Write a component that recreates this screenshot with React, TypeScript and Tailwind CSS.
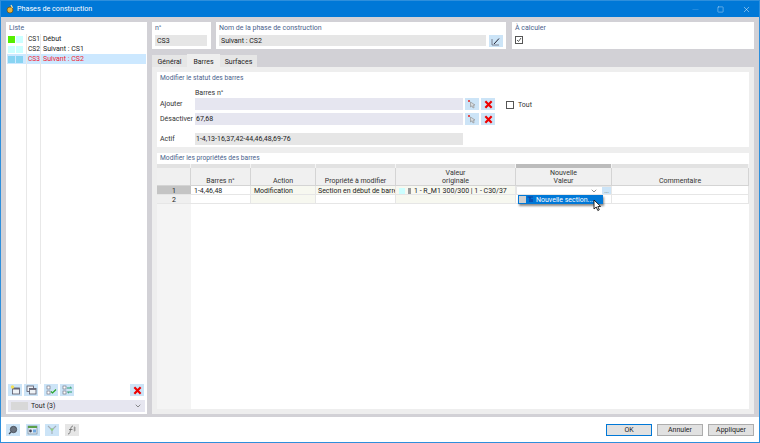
import { Minus, Square, X, ChevronDown } from "lucide-react"

const font = { fontFamily: 'Roboto, "Noto Sans", sans-serif' }

function IconBtn({ children, className = "" }: { children?: React.ReactNode; className?: string }) {
  return <div className={`flex h-[12px] w-[14px] items-center justify-center bg-[#cce4f7] ${className}`}>{children}</div>
}

function RedX({ size = 9 }: { size?: number }) {
  return (
    <svg width={size} height={size} viewBox="0 0 10 10">
      <path d="M1.5 1.5 L8.5 8.5 M8.5 1.5 L1.5 8.5" stroke="#ee0000" strokeWidth="2.4" />
    </svg>
  )
}

function PickIcon() {
  return (
    <svg width="10" height="10" viewBox="0 0 10 10">
      <path d="M1 1 L3 3 M3 1 L1 3" stroke="#e05050" strokeWidth="1" />
      <path d="M3.5 3 L3.5 8 L5 6.8 L6 9 L7.2 8.4 L6.2 6.3 L8 6 Z" fill="#d8dce0" stroke="#888" strokeWidth="0.6" />
    </svg>
  )
}

function ListRow({ a, b, id, name, selected }: { a: string; b: string; id: string; name: string; selected?: boolean }) {
  return (
    <div className={`flex h-[10px] items-center ${selected ? "bg-[#cce8ff] text-[#f01a30]" : "text-[#222]"}`}>
      <div className="flex w-[20px] shrink-0 gap-[1px] pl-[1px]">
        <div className={`h-[7px] w-[7px] ${a}`} />
        <div className={`h-[7px] w-[7px] ${b}`} />
      </div>
      <div className="relative w-[14px] shrink-0 pl-[1px] text-[6.6px]">{id}</div>
      <div className="relative pl-[2px]">{name}</div>
    </div>
  )
}

function SectionTitle({ children }: { children: React.ReactNode }) {
  return <div className="text-[6.7px] leading-[10px] text-[#4a5f8c]">{children}</div>
}

function MemberRow({ label, value, tools }: { label: string; value?: string; tools?: boolean }) {
  return (
    <div className="flex h-[12px] items-center">
      <div className="w-[35px] shrink-0 text-[#333]">{label}</div>
      <div className="flex h-[12px] w-[268px] items-center bg-[#e6e6f0] pl-[1px] text-[#222]">{value}</div>
      {tools && (
        <div className="ml-[2px] flex gap-[2px]">
          <IconBtn><PickIcon /></IconBtn>
          <IconBtn><RedX /></IconBtn>
        </div>
      )}
    </div>
  )
}

const cols = "grid-cols-[34px_60px_65px_80px_120px_96px_137px]"

function HeadCell({ children, className = "" }: { children?: React.ReactNode; className?: string }) {
  return (
    <div className={`flex h-[18px] flex-col items-center justify-end border-r border-b border-[#d4d4d4] bg-[#f0f0f0] text-center leading-[8px] text-[#333] ${className}`}>
      {children}
    </div>
  )
}

function Band({ dark }: { dark?: boolean }) {
  return <div className={`h-[4px] border-r border-[#f4f4f4] ${dark ? "bg-[#bcbcbc]" : "bg-[#e2e2e2]"}`} />
}

function Cell({ children, tint, className = "" }: { children?: React.ReactNode; tint?: boolean; className?: string }) {
  return (
    <div className={`flex h-[9px] items-center overflow-hidden whitespace-nowrap border-r border-b border-[#e6e6e6] pl-[3px] pt-[1px] leading-[8px] text-[#222] ${tint ? "bg-[#f7f8f0]" : "bg-white"} ${className}`}>
      {children}
    </div>
  )
}

function ToolIcon({ type }: { type: string }) {
  if (type === "new")
    return (
      <svg width="11" height="10" viewBox="0 0 11 10">
        <rect x="2.5" y="3" width="7" height="6" fill="#eef2f6" stroke="#556" strokeWidth="0.8" />
        <rect x="2.5" y="3" width="7" height="1.5" fill="#667" />
        <circle cx="2.5" cy="2" r="1.7" fill="#f4e05a" />
      </svg>
    )
  if (type === "copy")
    return (
      <svg width="11" height="10" viewBox="0 0 11 10">
        <rect x="1" y="1" width="6.5" height="5.5" fill="#eef2f6" stroke="#556" strokeWidth="0.8" />
        <rect x="3.5" y="3.5" width="6.5" height="5.5" fill="#eef2f6" stroke="#556" strokeWidth="0.8" />
        <rect x="3.5" y="3.5" width="6.5" height="1.4" fill="#667" />
      </svg>
    )
  if (type === "check")
    return (
      <svg width="11" height="10" viewBox="0 0 11 10">
        <rect x="1" y="1" width="3" height="3" fill="#fff" stroke="#667" strokeWidth="0.6" />
        <rect x="1" y="6" width="3" height="3" fill="#fff" stroke="#667" strokeWidth="0.6" />
        <path d="M5 6.5 L6.5 8 L10 4.5" fill="none" stroke="#2aa52a" strokeWidth="1.2" />
      </svg>
    )
  return (
    <svg width="11" height="10" viewBox="0 0 11 10">
      <rect x="1" y="1" width="3" height="3" fill="#fff" stroke="#667" strokeWidth="0.6" />
      <rect x="1" y="6" width="3" height="3" fill="#fff" stroke="#667" strokeWidth="0.6" />
      <path d="M5 3 H9.5 M9.5 3 L8 1.8 M10 7 H5.5 M5.5 7 L7 8.2" fill="none" stroke="#2f9e6e" strokeWidth="1" />
    </svg>
  )
}

function FootBtn({ children }: { children: React.ReactNode }) {
  return <div className="flex h-[12px] w-[14px] items-center justify-center bg-[#cce4f7]">{children}</div>
}

function DlgBtn({ label, primary }: { label: string; primary?: boolean }) {
  return (
    <div className={`flex h-[12px] w-[46px] items-center justify-center border bg-[#e1e1e1] text-[#222] ${primary ? "border-[#0078d7]" : "border-[#adadad]"}`}>
      {label}
    </div>
  )
}

export default function App() {
  return (
    <div style={font} className="flex h-[443px] w-[760px] flex-col overflow-hidden border border-[#2e8fdc] bg-[#d2d1d6] text-[7px] leading-[10px]">
      {/* title bar */}
      <div className="flex h-[16px] shrink-0 items-center bg-[#0078d7] text-white">
        <svg className="ml-[5px]" width="9" height="10" viewBox="0 0 9 10">
          <circle cx="4" cy="6" r="3" fill="#e8b23a" stroke="#6b4a10" strokeWidth="0.7" />
          <path d="M5 1 L6.5 4" stroke="#f3e0a0" strokeWidth="1.2" />
        </svg>
        <span className="ml-[2px] text-[7.2px]">Phases de construction</span>
        <div className="ml-auto flex items-center">
          <Minus size={9} strokeWidth={1} className="mr-[17px] text-[#5aa9e6]" />
          <Square size={7} strokeWidth={1.2} className="mr-[18px]" />
          <X size={9} strokeWidth={1.2} className="mr-[8px]" />
        </div>
      </div>

      <div className="flex min-h-0 flex-1 gap-[5px] px-[5px] pt-[5px] pb-[3px]">
        {/* left list */}
        <div className="flex w-[141px] shrink-0 flex-col bg-white">
          <div className="h-[12px] pl-[3px] pt-[1px] leading-[10px] text-[#4a5f8c]">Liste</div>
          <div className="relative flex-1 pl-[1px] pr-[1px]">
            <div className="absolute top-0 bottom-0 left-[20px] border-l border-[#e8e8e8]" />
            <div className="absolute top-0 bottom-0 left-[34px] border-l border-[#e8e8e8]" />
            <ListRow a="bg-[#55ee00]" b="bg-[#ccffff]" id="CS1" name="Début" />
            <ListRow a="bg-[#ccffff]" b="bg-[#ccffff]" id="CS2" name="Suivant : CS1" />
            <ListRow a="bg-[#88d4f2]" b="bg-[#88d4f2]" id="CS3" name="Suivant : CS2" selected />
          </div>
          <div className="flex h-[12px] items-center pl-[2px] pr-[3px]">
            <IconBtn><ToolIcon type="new" /></IconBtn>
            <IconBtn className="ml-[2px]"><ToolIcon type="copy" /></IconBtn>
            <IconBtn className="ml-[6px]"><ToolIcon type="check" /></IconBtn>
            <IconBtn className="ml-[2px]"><ToolIcon type="swap" /></IconBtn>
            <IconBtn className="ml-auto"><RedX /></IconBtn>
          </div>
          <div className="mx-[2px] mt-[4px] mb-[2px] flex h-[12px] items-center bg-[#e6e6f0] pl-[3px] pr-[3px] text-[#222]">
            <div className="h-[8px] w-[17px] bg-[#d8d8d8]" />
            <span className="ml-[3px]">Tout (3)</span>
            <ChevronDown size={8} className="ml-auto text-[#555]" />
          </div>
        </div>

        {/* right side */}
        <div className="flex min-w-0 flex-1 flex-col">
          <div className="flex h-[27px] shrink-0">
            <div className="w-[59px] bg-white px-[3px] pt-[1px]">
              <div className="h-[12px] text-[#4a5f8c]">n°</div>
              <div className="flex h-[11px] w-[52px] items-center bg-[#e6e6e6] pl-[2px] text-[#222]">CS3</div>
            </div>
            <div className="ml-[5px] flex w-[290px] flex-col bg-white px-[3px] pt-[1px]">
              <div className="h-[12px] text-[#4a5f8c]">Nom de la phase de construction</div>
              <div className="flex gap-[3px]">
                <div className="flex h-[11px] w-[268px] items-center bg-[#e6e6e6] pl-[2px] text-[#222]">Suivant : CS2</div>
                <div className="flex h-[12px] w-[14px] items-center justify-center bg-[#cce4f7]">
                  <svg width="10" height="9" viewBox="0 0 10 9">
                    <path d="M1 2 V8 H8" fill="none" stroke="#667" strokeWidth="0.8" />
                    <path d="M3 7 L8 1.5" stroke="#223" strokeWidth="1" />
                  </svg>
                </div>
              </div>
            </div>
            <div className="ml-[6px] flex-1 bg-white px-[3px] pt-[1px]">
              <div className="h-[13px] text-[#4a5f8c]">À calculer</div>
              <div className="flex h-[8px] w-[8px] items-center justify-center border border-[#555]">
                <svg width="6" height="6" viewBox="0 0 6 6">
                  <path d="M1 3 L2.5 4.5 L5 1" fill="none" stroke="#333" strokeWidth="0.8" />
                </svg>
              </div>
            </div>
          </div>

          {/* tabs */}
          <div className="mt-[5px] flex h-[13px] shrink-0 items-end">
            <div className="flex h-[12px] w-[35px] items-center justify-center bg-[#e6e6e6] pt-[1px] text-[#222]">Général</div>
            <div className="flex h-[13px] w-[33px] items-center justify-center bg-[#eeeeee] pt-[2px] text-[#222]">Barres</div>
            <div className="flex h-[12px] w-[37px] items-center justify-center bg-[#e6e6e6] pt-[1px] text-[#222]">Surfaces</div>
          </div>

          <div className="flex min-h-0 flex-1 flex-col gap-[6px] bg-[#eeeeee] p-[5px]">
            {/* member status */}
            <div className="h-[75px] shrink-0 bg-white px-[3px] pt-[1px]">
              <SectionTitle>Modifier le statut des barres</SectionTitle>
              <div className="mt-[5px] ml-[35px] h-[10px] text-[#333]">Barres n°</div>
              <div className="relative flex flex-col gap-[3px]">
                <MemberRow label="Ajouter" tools />
                <MemberRow label="Désactiver" value="67,68" tools />
                <div className="absolute top-[2px] left-[346px] flex items-center gap-[4px] text-[#333]">
                  <div className="h-[8px] w-[8px] border border-[#555]" />
                  <span>Tout</span>
                </div>
              </div>
              <div className="mt-[8px] flex h-[12px] items-center">
                <div className="w-[35px] shrink-0 text-[#333]">Actif</div>
                <div className="flex h-[12px] w-[268px] items-center bg-[#e6e6e6] pl-[1px] text-[#222]">1-4,13-16,37,42-44,46,48,69-76</div>
              </div>
            </div>

            {/* member properties */}
            <div className="flex min-h-0 flex-1 flex-col bg-white">
              <div className="h-[11px] shrink-0 pl-[3px]">
                <SectionTitle>Modifier les propriétés des barres</SectionTitle>
              </div>
              <div className="relative min-h-0 flex-1">
                <div className={`grid ${cols}`}>
                  <Band /><Band /><Band /><Band /><Band /><Band dark /><Band />
                  <HeadCell />
                  <HeadCell>Barres n°</HeadCell>
                  <HeadCell>Action</HeadCell>
                  <HeadCell>Propriété à modifier</HeadCell>
                  <HeadCell><span>Valeur</span><span>originale</span></HeadCell>
                  <HeadCell><span>Nouvelle</span><span>Valeur</span></HeadCell>
                  <HeadCell>Commentaire</HeadCell>

                  <div className="flex h-[9px] items-center justify-center border-b border-[#e6e6e6] bg-[#c4c4c4] pt-[1px] leading-[8px] text-[#222]">1</div>
                  <Cell>1-4,46,48</Cell>
                  <Cell tint>Modification</Cell>
                  <Cell tint className="!pl-[2px]">Section en début de barre</Cell>
                  <Cell tint className="!pl-[3px]">
                    <span className="mr-[3px] h-[6px] w-[6px] shrink-0 bg-[#ccffff]" />
                    <span className="mr-[3px] h-[6px] w-[3px] shrink-0 bg-[#9a9a9a]" />
                    1 - R_M1 300/300 | 1 - C30/37
                  </Cell>
                  <Cell className="border border-[#b9b9e0] !pl-0">
                    <ChevronDown size={8} className="ml-auto mr-[4px] text-[#555]" />
                    <div className="flex h-[8px] w-[9px] shrink-0 items-center justify-center bg-[#cce4f7] text-[6px] leading-[6px] text-[#333]">...</div>
                  </Cell>
                  <Cell />

                  <div className="flex h-[9px] items-center justify-center border-b border-[#e6e6e6] bg-[#efefef] pt-[1px] leading-[8px] text-[#222]">2</div>
                  <Cell />
                  <Cell tint />
                  <Cell />
                  <Cell tint />
                  <Cell />
                  <Cell />
                </div>
                <div className="absolute top-[40px] bottom-0 left-0 w-[34px] bg-[#f4f4f4]" />

                {/* open dropdown */}
                <div className="absolute top-[31px] left-[361px] flex h-[9px] w-[85px] items-center bg-[#0078d7] text-white shadow-[1px_2px_2px_rgba(0,0,0,0.45)]">
                  <div className="ml-[1px] h-[7px] w-[7px] bg-[#d0d0d0]" />
                  <svg className="ml-[1px]" width="7" height="7" viewBox="0 0 7 7">
                    <path d="M0.5 1 H6 M3 1 V6 M5 3 V6" stroke="#123a9c" strokeWidth="1.2" fill="none" />
                  </svg>
                  <span className="ml-[2px]">Nouvelle section...</span>
                </div>
                <svg className="absolute top-[35px] left-[436px]" width="9" height="13" viewBox="0 0 9 13">
                  <path d="M1 1 V10 L3.2 8 L4.8 11.5 L6.3 10.8 L4.8 7.6 L7.6 7.4 Z" fill="#fff" stroke="#111" strokeWidth="0.9" />
                </svg>
              </div>
            </div>
          </div>
        </div>
      </div>

      {/* footer */}
      <div className="flex h-[25px] shrink-0 items-center bg-white pl-[5px] pr-[5px]">
        <div className="flex gap-[5.5px]">
          <FootBtn>
            <svg width="10" height="10" viewBox="0 0 10 10">
              <circle cx="5.5" cy="4.5" r="3.2" fill="#6b7480" stroke="#3f4650" strokeWidth="0.8" />
              <path d="M3 7 L1 9" stroke="#3f4650" strokeWidth="1.3" />
            </svg>
          </FootBtn>
          <FootBtn>
            <svg width="11" height="10" viewBox="0 0 11 10">
              <rect x="1" y="1" width="9" height="8" fill="#dfeaf4" stroke="#6a7c8c" strokeWidth="0.6" />
              <rect x="1" y="1" width="9" height="2" fill="#5aa04a" />
              <circle cx="3.5" cy="6" r="1.4" fill="#445" />
              <rect x="6" y="4.5" width="3" height="3" fill="#6fa8e0" />
            </svg>
          </FootBtn>
          <FootBtn>
            <svg width="10" height="10" viewBox="0 0 10 10">
              <path d="M1 1 L5 5 L9 1 M5 5 V9" fill="none" stroke="#a3adb6" strokeWidth="1.1" />
              <circle cx="5" cy="4.5" r="1.3" fill="#8fd07f" />
            </svg>
          </FootBtn>
          <div className="flex h-[12px] w-[14px] items-center justify-center bg-[#e6e6e6]">
            <svg width="10" height="10" viewBox="0 0 10 10">
              <path d="M1 9 C3 9 3 7 3.5 5 C4 2 4.5 1 6 1 M2 4.5 H5.5" fill="none" stroke="#666" strokeWidth="0.8" />
              <path d="M6.5 3 H9 M6.5 5 H9 M7.5 1.5 V6.5" stroke="#888" strokeWidth="0.7" />
            </svg>
          </div>
        </div>
        <div className="ml-auto flex gap-[5px]">
          <DlgBtn label="OK" primary />
          <DlgBtn label="Annuler" />
          <DlgBtn label="Appliquer" />
        </div>
      </div>
    </div>
  )
}
